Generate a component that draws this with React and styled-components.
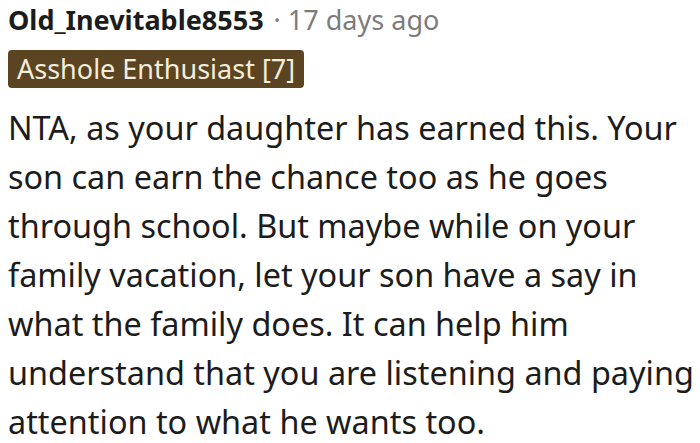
import styled, { createGlobalStyle } from "styled-components";

const Global = createGlobalStyle`
    body {
        margin: 0;
        background: #ffffff;
        font-family: "Noto Sans", "Liberation Sans", sans-serif;
    }
`

const Comment = styled.div`
    width: 700px;
    height: 443px;
    padding: 0 8px;
    box-sizing: border-box;
    overflow: hidden;
`

const Meta = styled.div`
    display: flex;
    align-items: baseline;
    font-size: 27px;
    line-height: 40px;
`

const Author = styled.span`
    font-weight: 700;
    color: #1c1c1c;
`

const Time = styled.span`
    color: #7c7c7c;
    margin-left: 10px;
`

const Flair = styled.div`
    width: fit-content;
    margin-top: 10px;
    padding: 0 9px;
    background: #5b4421;
    color: #f4ecdc;
    border-radius: 4px;
    font-size: 27px;
    line-height: 38px;
`

const Body = styled.div`
    margin-top: 15px;
    font-size: 32.4px;
    line-height: 49px;
    color: #1c1c1c;
`

const Line = styled.div`
    white-space: nowrap;
`

const lines = [
    "NTA, as your daughter has earned this. Your",
    "son can earn the chance too as he goes",
    "through school. But maybe while on your",
    "family vacation, let your son have a say in",
    "what the family does. It can help him",
    "understand that you are listening and paying",
    "attention to what he wants too.",
]

const App = () => {
    return (
        <Comment>
            <Global />
            <Meta>
                <Author>Old_Inevitable8553</Author>
                <Time>· 17 days ago</Time>
            </Meta>
            <Flair>Asshole Enthusiast [7]</Flair>
            <Body>
                {lines.map((text, i) => (
                    <Line key={i}>{text}</Line>
                ))}
            </Body>
        </Comment>
    )
}

export default App
